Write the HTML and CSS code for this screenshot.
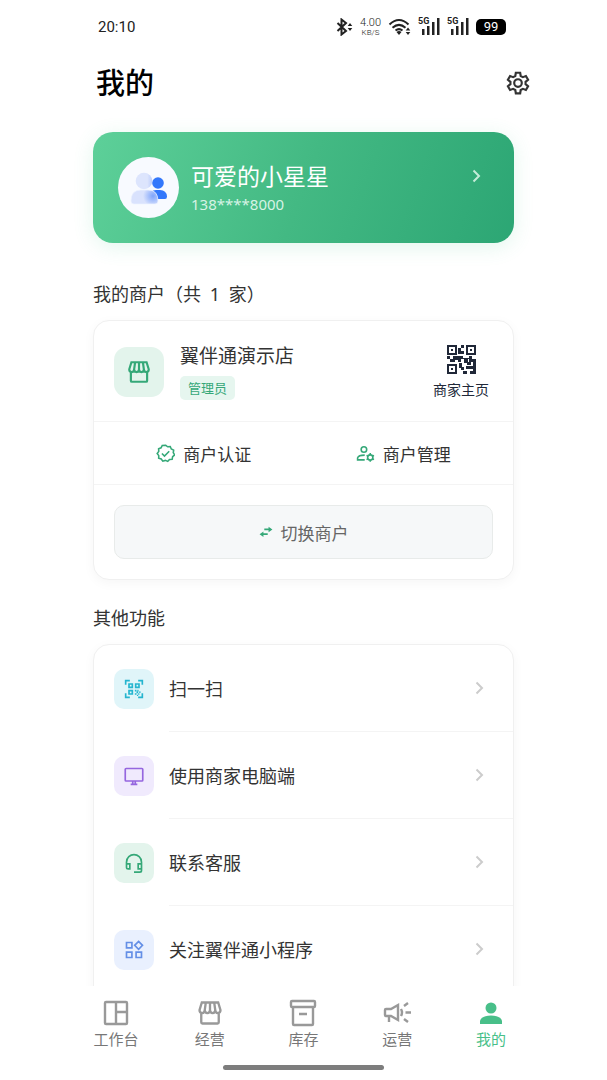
FILE: index.html
```html
<!DOCTYPE html>
<html lang="zh-CN">
<head>
  <meta charset="UTF-8">
  <meta name="viewport" content="width=device-width, initial-scale=1">
  <title>我的</title>
  <link rel="stylesheet" href="styles.css">
</head>
<body>
  <!-- 公用图标 -->
  <svg class="sprite" aria-hidden="true">
    <symbol id="store" viewBox="0 0 24 24">
      <path d="M5 3h14l2 6.5c0 3.4-4.5 3.4-4.5 0 0 3.4-4.5 3.4-4.5 0 0 3.4-4.5 3.4-4.5 0 0 3.4-4.5 3.4-4.5 0zM8.4 3l-.9 6.5M12 3v6.5M15.600 3l.9 6.500M4.500 12v8q0 1 1 1h13q1 0 1-1v-8"/>
    </symbol>
    <symbol id="arrow" viewBox="0 0 20 20">
      <path d="M7.500 4.500 13 10l-5.500 5.500"/>
    </symbol>
    <symbol id="signal" viewBox="0 0 22 18">
      <path d="M4 11h2.500v6H4zM9 8h2.500v9H9zM14 4h2.500v13H14zM19 0h2.500v17H19z"/>
    </symbol>
  </svg>

  <div class="screen">
    <div class="status">
      <span class="time">20:10</span>
      <div class="status-icons">
        <svg class="bt" viewBox="0 0 17 18"><path d="m1.500 5 8.500 8-4.500 3.500v-15L10 5l-8.500 8" fill="none" stroke="#222" stroke-width="2"/><path d="m14 5 2.300 3h-4.600zM14 13l-2.300-3h4.600z" fill="#222"/></svg>
        <div class="speed"><span>4.00</span><small>KB/S</small></div>
        <svg class="wifi" viewBox="0 0 23 18"><path d="M1.500 6.500Q11 -2.500 20.500 6.500M4.500 9.700q6.500-5.700 13 0M7.500 12.500q3.500-2.700 7 0" fill="none" stroke="#222" stroke-width="2"/><path d="m8.500 14 2.500 3 2.500-3q-2.500-2-5 0zM20 9.500l2.300 3h-4.600zM20 17l-2.300-3h4.600z" fill="#222"/></svg>
        <div class="signal"><b>5G</b><svg><use href="#signal"/></svg></div>
        <div class="signal"><b>5G</b><svg><use href="#signal"/></svg></div>
        <span class="battery">99</span>
      </div>
    </div>

    <header class="header">
      <h1>我的</h1>
      <button class="settings" type="button" aria-label="设置">
        <svg viewBox="0 0 24 24"><path d="M10 2.500h4l.5 3 2 1.100 2.800-1 2 3.400-2.300 1.900v2.200l2.300 1.900-2 3.400-2.800-1-2 1.100-.5 3h-4l-.5-3-2-1.100-2.800 1-2-3.400L5 13.100v-2.200L2.700 9l2-3.400 2.800 1 2-1.100z"/><circle cx="12" cy="12" r="3.500"/></svg>
      </button>
    </header>

    <main class="content">
      <a class="profile" href="#profile">
        <span class="avatar">
          <svg viewBox="0 0 38 34">
            <defs>
              <radialGradient id="bodyFill" gradientUnits="userSpaceOnUse" cx="23" cy="25" r="10">
                <stop offset="0" stop-color="#7ea4fb"/>
                <stop offset="1" stop-color="#d9e2fd"/>
              </radialGradient>
              <linearGradient id="headFill">
                <stop offset=".7" stop-color="#dde5fd"/>
                <stop offset="1" stop-color="#bccdfc"/>
              </linearGradient>
            </defs>
            <circle cx="28" cy="12" r="5.800" fill="#3377fb"/>
            <path d="M20 28v-2q0-7 6-7h4q6.500 0 7 6.500 0 2.500-2 2.500z" fill="#3377fb"/>
            <circle cx="14" cy="10" r="8.300" fill="url(#headFill)"/>
            <path d="M1 30q0-11 10-11h7q10 0 10 11 0 3-3 3H4q-3 0-3-3z" fill="url(#bodyFill)" stroke="#edf2ff" stroke-width=".7"/>
          </svg>
        </span>
        <span class="profile-text">
          <strong>可爱的小星星</strong>
          <span class="phone">138****8000</span>
        </span>
        <svg class="arrow"><use href="#arrow"/></svg>
      </a>

      <h2>我的商户（共 <span class="count">1</span> 家）</h2>
      <section class="card">
        <div class="shop">
          <span class="shop-icon"><svg><use href="#store"/></svg></span>
          <div class="shop-text">
            <h3>翼伴通演示店</h3>
            <span class="tag">管理员</span>
          </div>
          <a class="qr" href="#home">
            <svg viewBox="0 0 29 29"><path fill-rule="evenodd" d="M0 0h10v10H0zM2 2v6h6V2zM19 0h10v10H19zM21 2v6h6V2zM0 19h10v10H0zM2 21v6h6v-6zM4 4h2v2H4zM23 4h2v2h-2zM4 23h2v2H4zM14 0h3v3h-3zM11 3h3v3h3v3h-6zM0 11h3v3H0zM6 11h10v3h-2v3h-3v-2H8v2H3v-3h3zM22 11h3v3h4v5h-3v-2h-4v-3h-6v-1h6zM17 14h4v3h3v3h-4v-2h-3zM12 18h3v4h2v3h-3v-2h-2zM19 21h7v-2h3v10h-6v-3h3v-2h-7zM16 26h4v3h-4z"/></svg>
            <span>商家主页</span>
          </a>
        </div>
        <div class="actions">
          <a href="#verify">
            <svg viewBox="0 0 24 24"><path d="m12 1.500 2.700 2 3.300-.3 1.300 3.100 3 1.400-.5 3.300 1.700 2.800-2.500 2.200-.6 3.300-3.300.3-2.300 2.400-3-1.300-3.200 1-2-2.700-3.200-1 .1-3.300L1.500 12l2-2.700-.2-3.300 3.100-1.200 1.500-3z"/><path d="m7.500 12 3.200 3.200 6-6"/></svg>
            商户认证
          </a>
          <a href="#manage">
            <svg viewBox="0 0 24 24"><circle cx="10" cy="7" r="3.500"/><path d="M11 20H2v-2.500q1-3.500 9-3.500"/><circle cx="18" cy="17" r="3.300"/><path d="M18 11.500v2.300M18 20.200v2.300M13.300 14.300l2 1.100M20.700 18.600l2 1.100M13.300 19.700l2-1.100M20.700 15.400l2-1.100"/></svg>
            商户管理
          </a>
        </div>
        <div class="switch">
          <button type="button">
            <svg viewBox="0 0 16 14"><path d="M6 4h6M10 9.500H4"/><path class="solid" d="M11 .8 15.500 4 11 7.200zM5 6.300.5 9.500 5 12.700z"/></svg>
            切换商户
          </button>
        </div>
      </section>

      <h2>其他功能</h2>
      <section class="card list">
        <a class="row" href="#scan">
          <span class="row-icon cyan">
            <svg viewBox="0 0 24 24"><path d="M2 7V2h5M17 2h5v5M22 17v5h-5M7 22H2v-5M6 6h4v4H6zM14 6h4v4h-4zM6 14h4v4H6z"/><path class="solid" d="M13 13h2v2h-2zM16 13h1.500v2H16zM15 15h2v2h-2zM18 15h2v1.500h-2zM13 17h2v2h-2zM17 17h1.500v2H17zM15.500 19H17v1.500h-1.500z"/></svg>
          </span>
          <span class="row-body">扫一扫<svg class="arrow"><use href="#arrow"/></svg></span>
        </a>
        <a class="row" href="#desktop">
          <span class="row-icon purple">
            <svg viewBox="0 0 24 24"><rect x="1.500" y="3" width="21" height="15" rx="1"/><path d="M8 22h8M10.500 18v3.500M13.500 18v3.500"/></svg>
          </span>
          <span class="row-body">使用商家电脑端<svg class="arrow"><use href="#arrow"/></svg></span>
        </a>
        <a class="row" href="#service">
          <span class="row-icon green">
            <svg viewBox="0 0 24 24"><path d="M3 14v-3C3 -1 21 -1 21 11v10q0 2-2 2h-7M3 13h4v6H5q-2 0-2-2zM21 13h-4v6h4z"/></svg>
          </span>
          <span class="row-body">联系客服<svg class="arrow"><use href="#arrow"/></svg></span>
        </a>
        <a class="row" href="#miniapp">
          <span class="row-icon blue">
            <svg viewBox="0 0 24 24"><path d="M3 3h6.500v6.500H3zM3 14.500h6.500V21H3zM14.500 14.500H21V21h-6.500zM17.500 1.700l4.700 4.700-4.700 4.700-4.700-4.700z"/></svg>
          </span>
          <span class="row-body">关注翼伴通小程序<svg class="arrow"><use href="#arrow"/></svg></span>
        </a>
      </section>
    </main>

    <nav class="tabs">
      <a href="#work"><svg class="bold" viewBox="0 0 28 28"><rect x="3" y="3" width="22" height="22" rx="1"/><path d="M14 3v22M14 13h11"/></svg>工作台</a>
      <a href="#business"><svg><use href="#store"/></svg>经营</a>
      <a href="#stock"><svg class="bold" viewBox="0 0 28 28"><rect x="2" y="2" width="24" height="6" rx="1"/><path d="M4 8v17q0 1 1 1h18q1 0 1-1V8M10 15h8"/></svg>库存</a>
      <a href="#operate"><svg class="bold" viewBox="0 0 28 28"><path d="M8 10H3q-1 0-1 1v5q0 1 1 1h5l7 4V6zM6 17v6M18 10q2 3.500 0 7M21 7l4-3M22.500 13.500H28M21 20l4 3"/></svg>运营</a>
      <a class="active" href="#mine"><svg viewBox="0 0 28 28"><circle cx="14" cy="9" r="5.500"/><path d="M3 25v-3q1-5 11-5.500 10 .5 11 5.500v3z"/></svg>我的</a>
    </nav>
    <div class="home-bar"></div>
  </div>
</body>
</html>
```
FILE: styles.css
```css
* {
  box-sizing: border-box;
}
body {
  margin: 0;
  background: #fff;
  color: #333;
  font-family: "Noto Sans", "Noto Sans CJK SC", sans-serif;
}
a {
  color: inherit;
  text-decoration: none;
}
button {
  font: inherit;
  cursor: pointer;
}
svg {
  display: block;
  flex: none;
  fill: none;
  stroke: currentColor;
  stroke-width: 2;
}
.sprite {
  position: absolute;
  width: 0;
  height: 0;
}
.solid {
  fill: currentColor;
  stroke: none;
}
.screen {
  display: flex;
  flex-direction: column;
  height: 100vh;
  max-width: 469px;
  margin: 0 auto;
}

/* 状态栏 */
.status {
  display: flex;
  justify-content: space-between;
  align-items: center;
  height: 54px;
  padding: 0 32px 0 29px;
  color: #222;
}
.time {
  font-family: Roboto, sans-serif;
  font-size: 15px;
}
.status-icons {
  display: flex;
  align-items: center;
  gap: 7px;
}
.bt {
  width: 17px;
  height: 18px;
  stroke: none;
}
.speed {
  display: flex;
  flex-direction: column;
  align-items: center;
  font-family: Roboto, sans-serif;
  font-size: 11px;
  font-weight: 300;
  line-height: 12px;
}
.speed small {
  font-size: 8px;
  line-height: 8px;
}
.wifi {
  width: 23px;
  height: 18px;
  stroke: none;
}
.signal {
  position: relative;
}
.signal svg {
  width: 22px;
  height: 18px;
  fill: #222;
  stroke: none;
}
.signal b {
  position: absolute;
  top: -1px;
  left: 0;
  font-family: Roboto, sans-serif;
  font-size: 9px;
  line-height: 9px;
}
.battery {
  width: 30px;
  border-radius: 5px;
  background: #000;
  color: #fff;
  font-family: Roboto, sans-serif;
  font-size: 13px;
  line-height: 16px;
  text-align: center;
}

.header {
  display: flex;
  justify-content: space-between;
  align-items: center;
  height: 58px;
  margin-bottom: 6px;
  padding: 0 7px 0 27px;
}
h1 {
  margin: 0;
  color: #000;
  font-size: 29px;
  font-weight: 500;
  line-height: 40px;
}
.settings {
  padding: 0;
  border: 0;
  background: none;
  color: #333;
}
.settings svg {
  width: 26px;
  height: 26px;
}

.content {
  flex: 1;
  min-height: 0;
  padding: 14px 24px 20px;
  overflow-y: auto;
  scrollbar-width: none;
}

/* 个人信息 */
.profile {
  display: flex;
  align-items: center;
  height: 111px;
  margin-bottom: 39px;
  padding: 0 28px 0 25px;
  border-radius: 20px;
  background: linear-gradient(110deg, #5dd099, #43b983 50%, #2ca674);
  box-shadow: 0 4px 20px rgba(76, 200, 145, 0.16);
  color: #fff;
}
.avatar {
  display: flex;
  justify-content: center;
  align-items: center;
  width: 61px;
  height: 61px;
  border-radius: 50%;
  background: #f8faff;
}
.avatar svg {
  width: 38px;
  height: 34px;
  stroke: none;
}
.profile-text {
  flex: 1;
  padding-left: 12px;
}
.profile-text strong {
  display: block;
  font-size: 23px;
  font-weight: 400;
  line-height: 32px;
}
.phone {
  display: block;
  color: #d6f3e5;
  font-size: 15px;
  line-height: 24px;
}
.arrow {
  width: 20px;
  height: 20px;
  color: #ccc;
}
.profile .arrow {
  margin-bottom: 24px;
  color: #c4ecd8;
}

h2 {
  margin: 26px 0 14px;
  font-size: 18px;
  font-weight: 400;
  line-height: 24px;
}
.count {
  margin: 0 4px;
}
.card {
  border: 1px solid #f0f0f0;
  border-radius: 16px;
  background: #fff;
  box-shadow: 0 3px 12px rgba(0, 0, 0, 0.04);
}

/* 商户 */
.shop {
  display: flex;
  align-items: center;
  height: 100px;
  padding: 2px 24px 0 20px;
}
.shop-icon {
  display: flex;
  justify-content: center;
  align-items: center;
  width: 50px;
  height: 50px;
  border-radius: 13px;
  background: #e3f4ec;
  color: #35a878;
}
.shop-icon svg {
  width: 26px;
  height: 26px;
}
.shop-text {
  flex: 1;
  padding-left: 16px;
}
h3 {
  margin: 0 0 8px;
  font-size: 19px;
  font-weight: 400;
  line-height: 24px;
}
.tag {
  display: block;
  width: fit-content;
  padding: 0 8px;
  border-radius: 5px;
  background: #e6f6ef;
  color: #35a878;
  font-size: 13px;
  line-height: 24px;
}
.qr {
  display: flex;
  flex-direction: column;
  align-items: center;
  gap: 6px;
  color: #202838;
  font-size: 14px;
  line-height: 20px;
}
.qr svg {
  width: 29px;
  height: 29px;
  fill: currentColor;
  stroke: none;
}
.actions {
  display: flex;
  height: 64px;
  padding: 0 10px;
  border-top: 1px solid #f4f4f4;
  border-bottom: 1px solid #f4f4f4;
}
.actions a {
  display: flex;
  flex: 1;
  justify-content: center;
  align-items: center;
  gap: 8px;
  font-size: 17px;
}
.actions svg {
  width: 19px;
  height: 19px;
  color: #35a878;
}
.switch {
  padding: 20px;
}
.switch button {
  display: flex;
  justify-content: center;
  align-items: center;
  gap: 8px;
  width: 100%;
  height: 54px;
  border: 1px solid #e8ebea;
  border-radius: 10px;
  background: #f6f8f9;
  color: #666;
  font-size: 17px;
}
.switch svg {
  width: 14px;
  height: 12px;
  color: #35a878;
}

/* 功能列表 */
.list {
  padding-bottom: 20px;
}
.row {
  display: flex;
  align-items: center;
  gap: 15px;
  padding-left: 20px;
}
.row-icon {
  display: flex;
  justify-content: center;
  align-items: center;
  width: 40px;
  height: 40px;
  border-radius: 10px;
}
.row-icon svg {
  width: 20px;
  height: 20px;
}
.cyan {
  background: #e0f5f9;
  color: #25b5cf;
}
.purple {
  background: #f0eafd;
  color: #9566df;
}
.green {
  background: #e3f4ec;
  color: #35a878;
}
.blue {
  background: #e9f0fe;
  color: #648fe6;
}
.row-body {
  display: flex;
  flex: 1;
  justify-content: space-between;
  align-items: center;
  height: 87px;
  padding-right: 24px;
  border-bottom: 1px solid #f4f4f4;
  font-size: 18px;
}
.row:last-child .row-body {
  border-bottom-color: transparent;
}

/* 底部导航 */
.tabs {
  display: flex;
  height: 76px;
  padding-top: 13px;
}
.tabs a {
  display: flex;
  flex: 1;
  flex-direction: column;
  align-items: center;
  gap: 1px;
  color: #777;
  font-size: 15px;
  line-height: 22px;
}
.tabs svg {
  width: 28px;
  height: 28px;
  color: #999;
}
.tabs .bold {
  stroke-width: 2.4;
}
.tabs a.active {
  color: #48bf89;
}
.tabs .active svg {
  color: #48bf89;
  fill: currentColor;
  stroke: none;
}
.home-bar {
  width: 161px;
  height: 5px;
  margin: 3px auto 10px;
  border-radius: 3px;
  background: #7d7d7d;
}
```
